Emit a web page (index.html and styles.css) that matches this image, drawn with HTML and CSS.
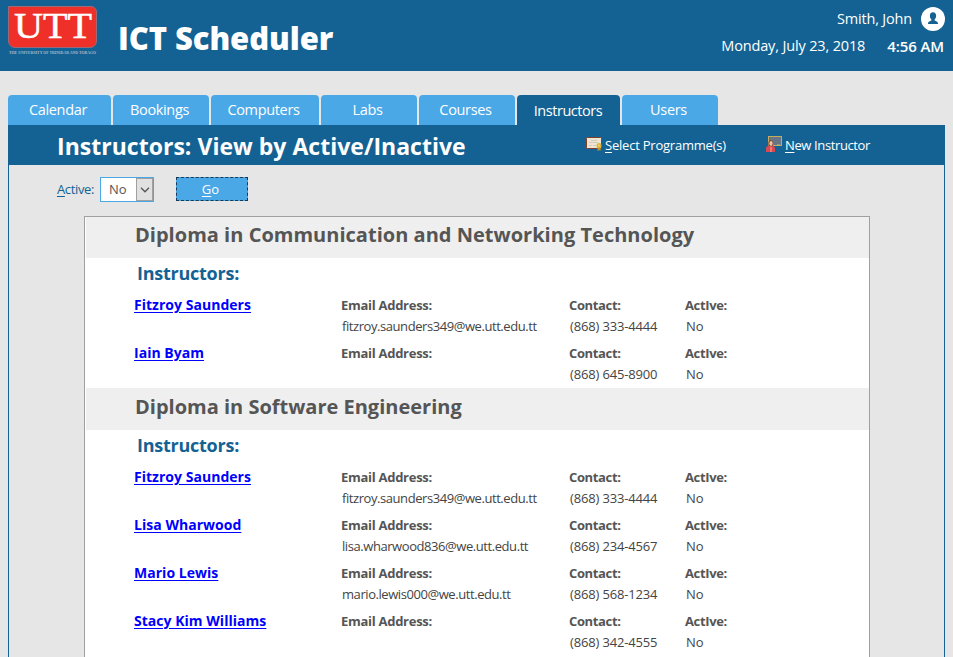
FILE: index.html
```
<!DOCTYPE html>
<html lang="en">
<head>
<meta charset="utf-8">
<title>ICT Scheduler</title>
<link rel="stylesheet" href="styles.css">
</head>
<body>
<header class="header">
  <div class="logo">
    <svg class="logo-mark" viewBox="0 0 89 42" width="89" height="42">
      <path d="M.5.5H83a5.500 5.500 0 0 1 5.500 5.500V35a6.500 6.500 0 0 1-6.500 6.500H7A6.500 6.500 0 0 1 .5 35Z" fill="#ee3028" stroke="#9b6a78"/>
      <text x="6" y="32" textLength="78" lengthAdjust="spacingAndGlyphs" class="logo-text">UTT</text>
    </svg>
    <svg class="logo-caption" viewBox="0 0 89 8" width="89" height="8">
      <text x="1" y="5" textLength="87" lengthAdjust="spacingAndGlyphs" class="logo-small">THE UNIVERSITY OF TRINIDAD AND TOBAGO</text>
    </svg>
  </div>
  <h1 class="app-title">ICT Scheduler</h1>
  <div class="session">
    <div class="user"><span>Smith, John</span>
      <svg viewBox="0 0 24 24" width="24" height="24"><circle cx="12" cy="12" r="12" fill="#fff"/><path d="M12 5.300c2 0 3.100 1.400 3.100 3.400 0 1.700-.6 3-1.500 3.700v1.100c1.800.7 3.500 1.300 3.500 3.400H6.900c0-2.100 1.700-2.700 3.500-3.400v-1.100c-.9-.7-1.500-2-1.500-3.700 0-2 1.100-3.400 3.100-3.400Z" fill="#146293"/></svg>
    </div>
    <div class="clock"><span>Monday, July 23, 2018</span><b>4:56 AM</b></div>
  </div>
</header>
<nav class="tabs">
  <a class="tab tab-first">Calendar</a>
  <a class="tab">Bookings</a>
  <a class="tab tab-wide">Computers</a>
  <a class="tab">Labs</a>
  <a class="tab">Courses</a>
  <a class="tab tab-active">Instructors</a>
  <a class="tab">Users</a>
</nav>
<main class="page">
  <div class="page-bar">
    <h2 class="page-title">Instructors: View by Active/Inactive</h2>
    <a class="action action-select">
      <svg viewBox="0 0 16 16" width="16" height="16"><rect x=".5" y="1.500" width="15" height="11" rx="1" fill="#eee5d3" stroke="#7d4028"/><path d="M5 4.500h6M3 6.500h9M3 9.500h3m1 0h3" stroke="#d3c9b8"/><path d="M11.500 10h3v5l-1.500-1-1.500 1Z" fill="#b99628"/><circle cx="13" cy="9.500" r="2.500" fill="#dcb43a"/><circle cx="13" cy="9.500" r="1" fill="#f0d778"/></svg>
      <span><u>S</u>elect Programme(s)</span>
    </a>
    <a class="action action-new">
      <svg viewBox="0 0 16 16" width="16" height="16"><rect x="2.500" y=".5" width="13" height="9" fill="#667684" stroke="#c5ac62"/><path d="M11 8.500h3" stroke="#8b98a3"/><path d="M0 16v-4.500q1-2 4.500-2t4.500 2V16Z" fill="#d94a50"/><path d="M2.500 10V6.500q0-2.500 2.200-2.500T7 6.500V10Z" fill="#7b4436"/><ellipse cx="5" cy="7.500" rx="1.600" ry="2.400" fill="#efc3ab"/><path d="M4 11h2v5H4Z" fill="#e7797b"/></svg>
      <span><u>N</u>ew Instructor</span>
    </a>
  </div>
  <div class="filter">
    <label class="filter-label"><u>A</u>ctive:</label>
    <div class="select"><span>No</span><i><svg viewBox="0 0 10 6" width="10" height="6"><path d="M1 .8 5 4.800 9 .8" fill="none" stroke="#555" stroke-width="1.300"/></svg></i></div>
    <div class="go"><u>G</u>o</div>
  </div>
  <div class="list">
    <section>
      <h3 class="programme">Diploma in Communication and Networking Technology</h3>
      <h4 class="group">Instructors:</h4>
      <div class="row"><a class="name">Fitzroy Saunders</a><div><b>Email Address:</b><p class="mail">fitzroy.saunders349@we.utt.edu.tt</p></div><div><b>Contact:</b><p>(868) 333-4444</p></div><div><b>ActIve:</b><p>No</p></div></div>
      <div class="row"><a class="name">Iain Byam</a><div><b>Email Address:</b></div><div><b>Contact:</b><p>(868) 645-8900</p></div><div><b>ActIve:</b><p>No</p></div></div>
    </section>
    <section>
      <h3 class="programme">Diploma in Software Engineering</h3>
      <h4 class="group">Instructors:</h4>
      <div class="row"><a class="name">Fitzroy Saunders</a><div><b>Email Address:</b><p class="mail">fitzroy.saunders349@we.utt.edu.tt</p></div><div><b>Contact:</b><p>(868) 333-4444</p></div><div><b>ActIve:</b><p>No</p></div></div>
      <div class="row"><a class="name">Lisa Wharwood</a><div><b>Email Address:</b><p class="mail">lisa.wharwood836@we.utt.edu.tt</p></div><div><b>Contact:</b><p>(868) 234-4567</p></div><div><b>ActIve:</b><p>No</p></div></div>
      <div class="row"><a class="name">Mario Lewis</a><div><b>Email Address:</b><p class="mail">mario.lewis000@we.utt.edu.tt</p></div><div><b>Contact:</b><p>(868) 568-1234</p></div><div><b>ActIve:</b><p>No</p></div></div>
      <div class="row"><a class="name">Stacy Kim Williams</a><div><b>Email Address:</b></div><div><b>Contact:</b><p>(868) 342-4555</p></div><div><b>ActIve:</b><p>No</p></div></div>
    </section>
  </div>
</main>
</body>
</html>
```
FILE: styles.css
```
* { box-sizing: border-box; }
html { height: 100%; overflow: hidden; }
body { margin: 0; height: 657px; overflow: hidden; display: flex; flex-direction: column; background: #e6e6e6; font: 13px "Open Sans", sans-serif; color: #444; }
h1, h2, h3, h4, p { margin: 0; white-space: nowrap; }
u { text-underline-offset: 2px; }

.header { flex: none; height: 71px; display: flex; background: #146293; color: #fff; padding-left: 8px; }
.logo { width: 89px; padding-top: 6px; display: flex; flex-direction: column; }
.logo-caption { margin-top: 1px; overflow: visible; }
.logo-text { font: 35px "Liberation Serif", serif; fill: #fff; stroke: #fff; stroke-width: .5px; }
.logo-small { font: bold 5px "Liberation Serif", serif; fill: #a9bccb; }
.app-title { margin-left: 21px; padding-top: 17px; font-size: 31px; line-height: 42px; font-weight: 800; letter-spacing: -.08px; }
.session { margin-left: auto; padding: 7px 8px 0 0; font-size: 14.500px; line-height: 20px; }
.user { height: 24px; display: flex; justify-content: flex-end; align-items: center; gap: 9px; letter-spacing: -.18px; }
.clock { margin: 5px 1px 0 0; display: flex; justify-content: flex-end; letter-spacing: -.15px; }
.clock b { margin-left: 22px; font-weight: 600; font-size: 15px; letter-spacing: -.1px; }

.tabs { flex: none; margin: 24px 0 0 8px; height: 30px; display: flex; gap: 2px; }
.tab { width: 96px; border-radius: 4px 4px 0 0; background: #4ba8e7; color: #fff; text-align: center; font-size: 14.500px; line-height: 29px; letter-spacing: -.34px; padding-right: 3px; }
.tab-first { width: 103px; }
.tab-wide { width: 108px; }
.tab-active { width: 103px; background: #146293; line-height: 31px; padding-right: 1px; letter-spacing: -.45px; }

.page { flex: 1; width: 937px; margin-left: 8px; border: solid #146293; border-width: 0 1px; display: flex; flex-direction: column; }
.page-bar { flex: none; height: 40px; margin: 0 -1px; padding-left: 49px; display: flex; background: #146293; color: #fff; }
.page-title { width: 529px; font-size: 23px; line-height: 43px; letter-spacing: .02px; }
.action { display: flex; gap: 3px; padding-top: 11px; line-height: 19px; white-space: nowrap; }
.action-select { width: 180px; }
.action-select span { letter-spacing: -.22px; }
.action-new span { letter-spacing: -.38px; }

.filter { flex: none; height: 51px; padding: 12px 0 0 48px; display: flex; line-height: 25px; }
.filter-label { width: 43px; color: #146293; letter-spacing: -.37px; }
.select { width: 54px; height: 25px; border: 1px solid #4ba8e7; background: #fff; display: flex; padding-left: 8px; line-height: 23px; color: #555; }
.select i { margin-left: auto; width: 17px; border: 1px solid #a0a0a0; background: #e1e1e1; display: flex; align-items: center; justify-content: center; }
.go { margin-left: 22px; width: 72px; height: 24px; border: 1px dashed #173a54; background: #4ba8e7; color: #fff; text-align: center; line-height: 22px; padding-right: 3px; }

.list { flex: 1; width: 786px; margin-left: 75px; border: 1px solid #a0a0a0; border-bottom: 0; background: #fff; padding-left: 1px; overflow: hidden; }
section { padding-bottom: 2px; }
.programme { height: 42px; background: #efefef; color: #555; padding-left: 49px; font-size: 20px; line-height: 37px; }
section:first-child .programme { height: 41px; line-height: 35px; letter-spacing: .02px; }
.group { height: 32px; padding-left: 51px; color: #146293; font-size: 18px; font-weight: 700; line-height: 30px; letter-spacing: -.25px; }
.row { height: 48px; display: grid; grid-template-columns: 207px 228px 116px 1fr; padding-left: 48px; white-space: nowrap; }
.row b { display: block; line-height: 30px; color: #555; letter-spacing: -.36px; }
.row div:nth-child(2) b { letter-spacing: -.28px; }
.row p { margin: -4px 0 0 1px; line-height: 20px; letter-spacing: -.16px; }
.row .mail { letter-spacing: -.43px; }
.name { color: #00f; font-size: 14px; font-weight: 700; line-height: 30px; letter-spacing: .03px; text-decoration: underline; text-underline-offset: 2px; }
```
